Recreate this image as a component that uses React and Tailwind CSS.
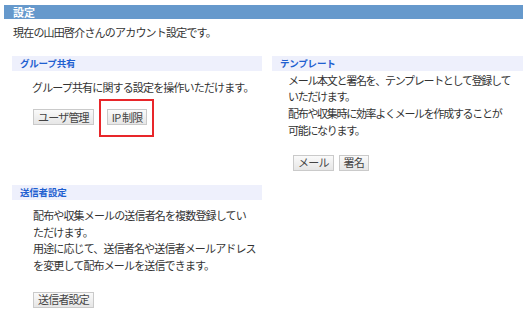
import React from 'react';

const jp = { fontFamily: '"Noto Sans CJK JP", "Noto Sans", sans-serif' };

const Btn = ({ children }) => (
  <span className="inline-flex h-[16px] items-center border border-[#cacaca] bg-gradient-to-b from-[#fafafa] to-[#e6e6e6] px-[4px] text-[11px] leading-none tracking-[-0.8px] text-[#444]">
    {children}
  </span>
);

const Band = ({ children }) => (
  <div className="flex h-[15px] items-center bg-[#eef0fc] pl-[8px] text-[9.5px] font-bold tracking-[-0.2px] text-[#1f5fd0]">
    {children}
  </div>
);

const Lines = ({ lines, tight }) => (
  <div
    className={
      tight
        ? 'text-[11px] leading-[16.8px] tracking-[-1.3px] text-[#333] whitespace-nowrap'
        : 'text-[11px] leading-[16.5px] tracking-[-0.85px] text-[#333] whitespace-nowrap'
    }
  >
    {lines.map((l) => (
      <div key={l}>{l}</div>
    ))}
  </div>
);

export default function App() {
  return (
    <div className="min-h-[309px] w-[530px] bg-white pl-[4px] pt-[5px]" style={jp}>
      {/* Header */}
      <div className="flex h-[14px] w-[519px] items-center bg-[#6699cc] pl-[9px] text-[11px] font-bold text-white">
        設定
      </div>
      <div className="mt-[5px] pl-[9px] text-[11px] leading-[16.5px] tracking-[-0.8px] text-[#333]">
        現在の山田啓介さんのアカウント設定です。
      </div>

      <div className="ml-[8px] mt-[15px] grid w-[511px] grid-cols-[250px_251px] gap-x-[10px]">
        {/* Left column */}
        <div className="flex flex-col">
          <Band>グループ共有</Band>
          <div className="mt-[8px] pl-[20px]">
            <Lines lines={['グループ共有に関する設定を操作いただけます。']} />
          </div>
          <div className="mt-[14px] flex items-center pl-[21px]">
            <Btn>ユーザ管理</Btn>
            <span className="relative ml-[13px] inline-flex">
              <Btn>IP 制限</Btn>
              <span className="absolute -bottom-[12px] -left-[8px] -right-[7px] -top-[10px] border-2 border-[#e8262a]" />
            </span>
          </div>

          <div className="mt-[60px]">
            <Band>送信者設定</Band>
          </div>
          <div className="mt-[7px] pl-[21px]">
            <Lines
              lines={[
                '配布や収集メールの送信者名を複数登録してい',
                'ただけます。',
                '用途に応じて、送信者名や送信者メールアドレス',
                'を変更して配布メールを送信できます。',
              ]}
            />
          </div>
          <div className="mt-[12px] pl-[21px]">
            <Btn>送信者設定</Btn>
          </div>
        </div>

        {/* Right column */}
        <div className="flex flex-col">
          <Band>テンプレート</Band>
          <div className="mt-[1px] pl-[16px]">
            <Lines
              tight
              lines={[
                'メール本文と署名を、テンプレートとして登録して',
                'いただけます。',
                '配布や収集時に効率よくメールを作成することが',
                '可能になります。',
              ]}
            />
          </div>
          <div className="mt-[16px] flex gap-[5px] pl-[21px]">
            <Btn>メール</Btn>
            <Btn>署名</Btn>
          </div>
        </div>
      </div>
    </div>
  );
}
